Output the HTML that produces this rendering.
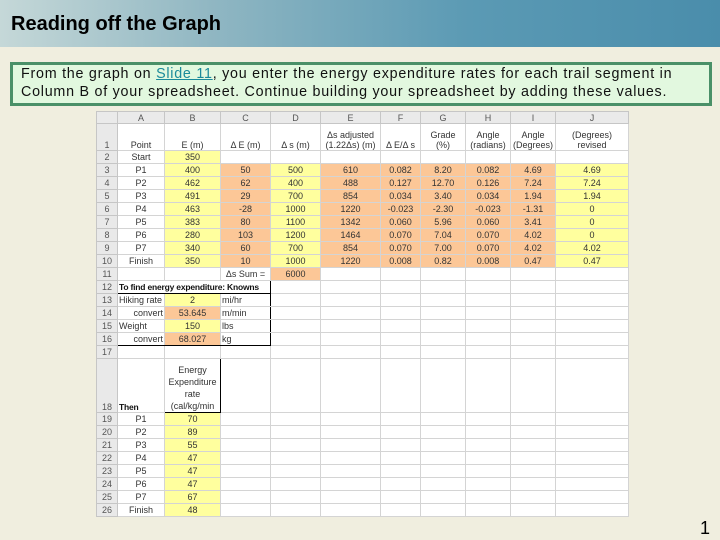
<!DOCTYPE html>
<html><head><meta charset="utf-8"><style>
body{margin:0;width:720px;height:540px;background:#f0eedf;position:relative;overflow:hidden;font-family:"Liberation Sans",sans-serif}
#hd{position:absolute;left:0;top:0;width:720px;height:47px;background:linear-gradient(90deg,#c5d8d8 0%,#8fb6c2 30%,#5b9ab4 65%,#4a8dab 100%)}
#hd h1{margin:0;position:absolute;left:11px;top:13px;font-size:20px;font-weight:bold;color:#000}
#box{position:absolute;left:10px;top:62px;width:688px;height:38px;border:3px solid #4a9068;background:#e2f8df;font-size:14.3px;letter-spacing:0.75px;line-height:18px;padding:0 0 0 8px;box-sizing:content-box;color:#111;white-space:nowrap}
#box a{color:#1a8a9a;text-decoration:underline}
#pg{position:absolute;right:10px;top:518px;font-size:18px}
table{position:absolute;left:96px;top:111px;width:532px;border-collapse:collapse;table-layout:fixed;background:#fff;font-size:9px;color:#333;border:1px solid #000}
td{border:1px solid #d4d4d4;padding:0 1px;text-align:center;height:12px;line-height:10px;overflow:hidden;white-space:nowrap}
td.h{background:#e9e9e9;color:#555;border-color:#c6c6c6}
tr.c td{background:#eaeaea;color:#555;height:11px;border-color:#c6c6c6}
.y{background:#ffff9e}.o{background:#fcc797}
td.l{text-align:left}
.b{font-weight:bold;color:#111;font-size:8.5px;letter-spacing:-0.2px}
</style></head><body>
<div id="hd"><h1>Reading off the Graph</h1></div>
<div id="box">From the graph on <a>Slide 11</a>, you enter the energy expenditure rates for each trail segment in<br>Column B of your spreadsheet. Continue building your spreadsheet by adding these values.</div>
<table>
<colgroup><col style="width:21px"><col style="width:47px"><col style="width:56px"><col style="width:50px"><col style="width:50px"><col style="width:60px"><col style="width:40px"><col style="width:45px"><col style="width:45px"><col style="width:45px"><col style="width:73px"></colgroup>
<tr class="c"><td></td><td>A</td><td>B</td><td>C</td><td>D</td><td>E</td><td>F</td><td>G</td><td>H</td><td>I</td><td>J</td></tr>
<tr style="height:27px"><td class="h" style="vertical-align:bottom">1</td><td style="vertical-align:bottom">Point</td><td style="vertical-align:bottom">E (m)</td><td style="vertical-align:bottom">Δ E (m)</td><td style="vertical-align:bottom">Δ s (m)</td><td style="vertical-align:bottom">Δs adjusted<br>(1.22Δs) (m)</td><td style="vertical-align:bottom">Δ E/Δ s</td><td style="vertical-align:bottom">Grade<br>(%)</td><td style="vertical-align:bottom">Angle<br>(radians)</td><td style="vertical-align:bottom">Angle<br>(Degrees)</td><td style="vertical-align:bottom">(Degrees)<br>revised</td></tr>
<tr><td class="h">2</td><td>Start</td><td class="y">350</td><td></td><td></td><td></td><td></td><td></td><td></td><td></td><td></td></tr>
<tr><td class="h">3</td><td>P1</td><td class="y">400</td><td class="o">50</td><td class="y">500</td><td class="o">610</td><td class="o">0.082</td><td class="o">8.20</td><td class="o">0.082</td><td class="o">4.69</td><td class="y">4.69</td></tr>
<tr><td class="h">4</td><td>P2</td><td class="y">462</td><td class="o">62</td><td class="y">400</td><td class="o">488</td><td class="o">0.127</td><td class="o">12.70</td><td class="o">0.126</td><td class="o">7.24</td><td class="y">7.24</td></tr>
<tr><td class="h">5</td><td>P3</td><td class="y">491</td><td class="o">29</td><td class="y">700</td><td class="o">854</td><td class="o">0.034</td><td class="o">3.40</td><td class="o">0.034</td><td class="o">1.94</td><td class="y">1.94</td></tr>
<tr><td class="h">6</td><td>P4</td><td class="y">463</td><td class="o">-28</td><td class="y">1000</td><td class="o">1220</td><td class="o">-0.023</td><td class="o">-2.30</td><td class="o">-0.023</td><td class="o">-1.31</td><td class="y">0</td></tr>
<tr><td class="h">7</td><td>P5</td><td class="y">383</td><td class="o">80</td><td class="y">1100</td><td class="o">1342</td><td class="o">0.060</td><td class="o">5.96</td><td class="o">0.060</td><td class="o">3.41</td><td class="y">0</td></tr>
<tr><td class="h">8</td><td>P6</td><td class="y">280</td><td class="o">103</td><td class="y">1200</td><td class="o">1464</td><td class="o">0.070</td><td class="o">7.04</td><td class="o">0.070</td><td class="o">4.02</td><td class="y">0</td></tr>
<tr><td class="h">9</td><td>P7</td><td class="y">340</td><td class="o">60</td><td class="y">700</td><td class="o">854</td><td class="o">0.070</td><td class="o">7.00</td><td class="o">0.070</td><td class="o">4.02</td><td class="y">4.02</td></tr>
<tr><td class="h">10</td><td>Finish</td><td class="y">350</td><td class="o">10</td><td class="y">1000</td><td class="o">1220</td><td class="o">0.008</td><td class="o">0.82</td><td class="o">0.008</td><td class="o">0.47</td><td class="y">0.47</td></tr>
<tr><td class="h">11</td><td></td><td></td><td>Δs Sum =</td><td class="o">6000</td><td></td><td></td><td></td><td></td><td></td><td></td></tr>
<tr><td class="h">12</td><td colspan="3" class="l b" style="border:1px solid #000">To find energy expenditure: Knowns</td><td></td><td></td><td></td><td></td><td></td><td></td><td></td></tr>
<tr><td class="h">13</td><td class="l">Hiking rate</td><td class="y">2</td><td class="l" style="border-right:1px solid #000">mi/hr</td><td></td><td></td><td></td><td></td><td></td><td></td><td></td></tr>
<tr><td class="h">14</td><td style="text-align:right">convert</td><td class="o">53.645</td><td class="l" style="border-right:1px solid #000">m/min</td><td></td><td></td><td></td><td></td><td></td><td></td><td></td></tr>
<tr><td class="h">15</td><td class="l">Weight</td><td class="y">150</td><td class="l" style="border-right:1px solid #000">lbs</td><td></td><td></td><td></td><td></td><td></td><td></td><td></td></tr>
<tr><td class="h">16</td><td style="text-align:right;border-bottom:1px solid #000">convert</td><td class="o" style="border-bottom:1px solid #000">68.027</td><td class="l" style="border:1px solid #000;border-left-color:#d4d4d4">kg</td><td></td><td></td><td></td><td></td><td></td><td></td><td></td></tr>
<tr><td class="h">17</td><td></td><td></td><td></td><td></td><td></td><td></td><td></td><td></td><td></td><td></td></tr>
<tr style="height:54px"><td class="h" style="vertical-align:bottom">18</td><td class="l b" style="vertical-align:bottom">Then</td><td style="vertical-align:bottom;white-space:normal;line-height:12px;border:1px solid #000">Energy Expenditure rate (cal/kg/min</td><td></td><td></td><td></td><td></td><td></td><td></td><td></td><td></td></tr>
<tr><td class="h">19</td><td>P1</td><td class="y">70</td><td></td><td></td><td></td><td></td><td></td><td></td><td></td><td></td></tr>
<tr><td class="h">20</td><td>P2</td><td class="y">89</td><td></td><td></td><td></td><td></td><td></td><td></td><td></td><td></td></tr>
<tr><td class="h">21</td><td>P3</td><td class="y">55</td><td></td><td></td><td></td><td></td><td></td><td></td><td></td><td></td></tr>
<tr><td class="h">22</td><td>P4</td><td class="y">47</td><td></td><td></td><td></td><td></td><td></td><td></td><td></td><td></td></tr>
<tr><td class="h">23</td><td>P5</td><td class="y">47</td><td></td><td></td><td></td><td></td><td></td><td></td><td></td><td></td></tr>
<tr><td class="h">24</td><td>P6</td><td class="y">47</td><td></td><td></td><td></td><td></td><td></td><td></td><td></td><td></td></tr>
<tr><td class="h">25</td><td>P7</td><td class="y">67</td><td></td><td></td><td></td><td></td><td></td><td></td><td></td><td></td></tr>
<tr><td class="h">26</td><td>Finish</td><td class="y">48</td><td></td><td></td><td></td><td></td><td></td><td></td><td></td><td></td></tr>
</table>
<div id="pg">1</div>
</body></html>
